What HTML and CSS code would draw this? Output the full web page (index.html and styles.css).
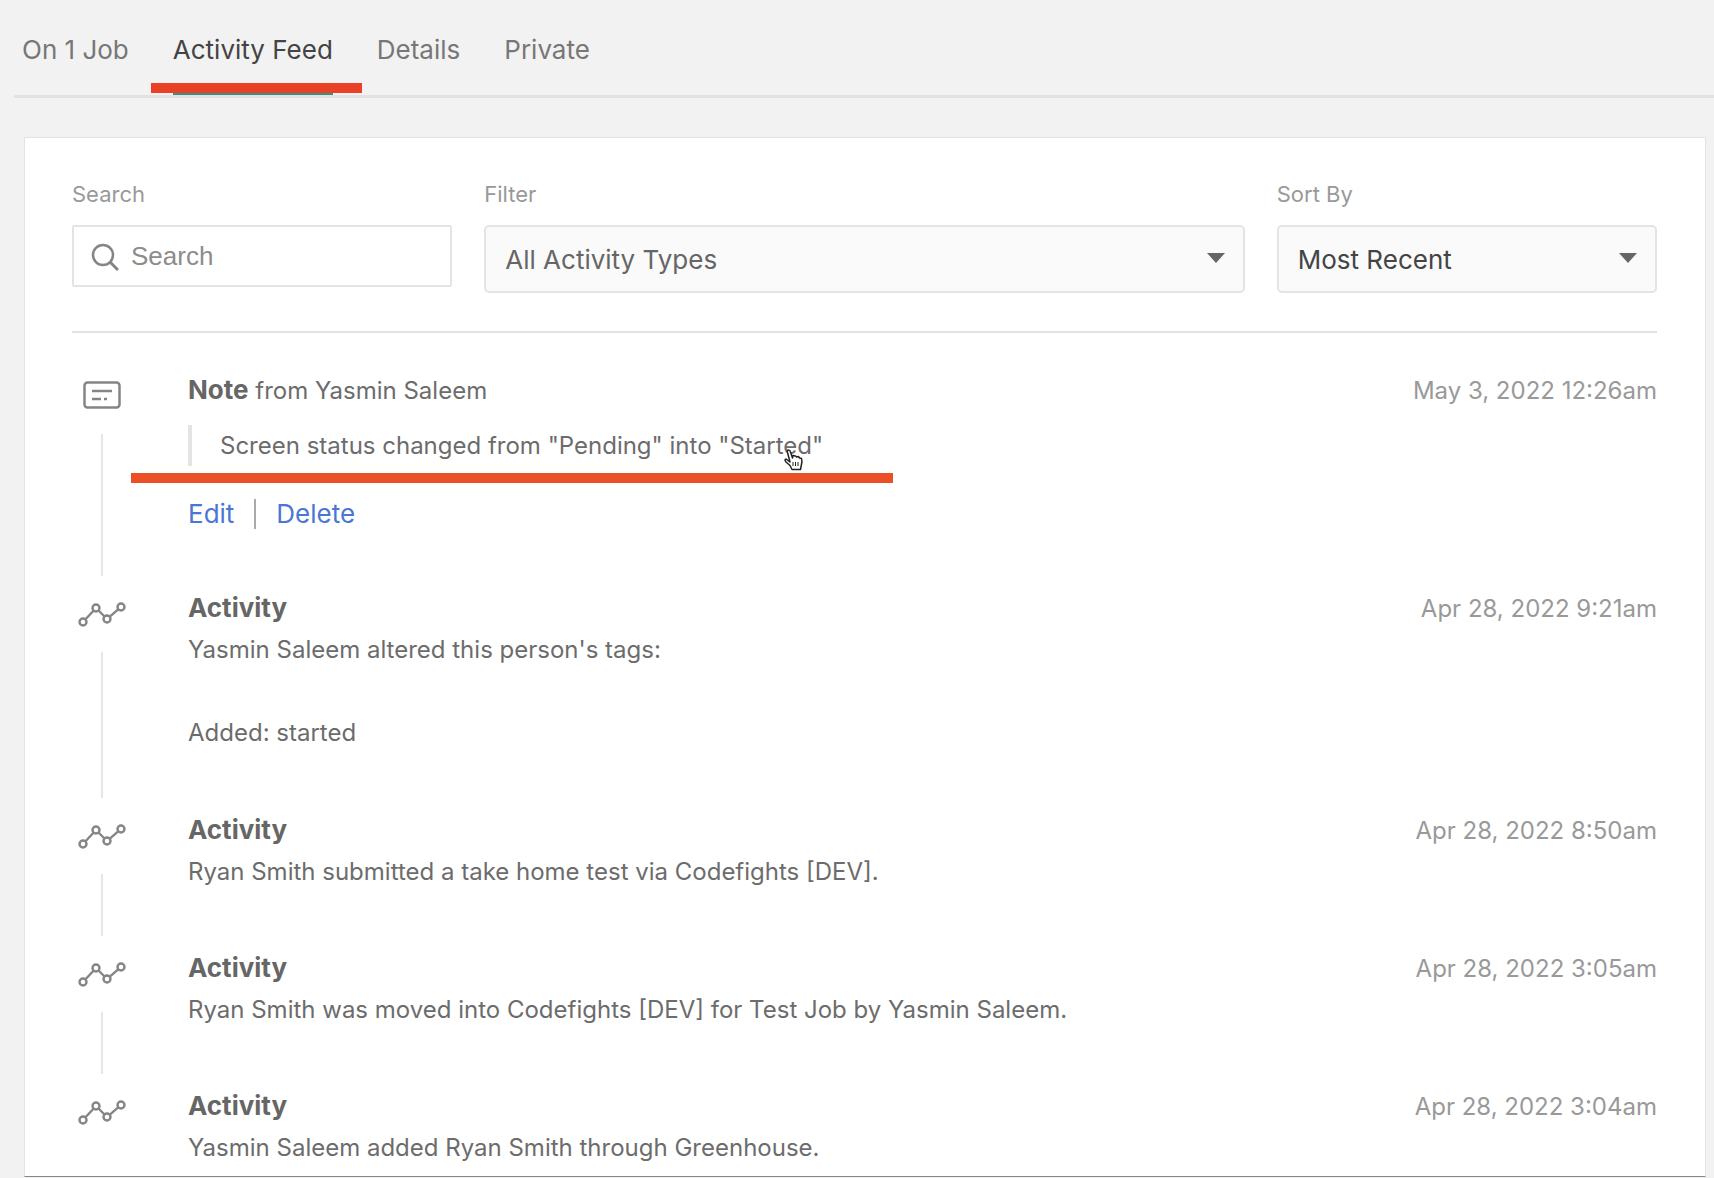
FILE: index.html
```html
<!DOCTYPE html>
<html lang="en">
<head>
  <meta charset="UTF-8">
  <meta name="viewport" content="width=device-width, initial-scale=1.0">
  <title>Activity Feed</title>
  <link rel="stylesheet" href="styles.css">
</head>
<body>

<svg class="sprite" aria-hidden="true">
  <symbol id="icon-activity" viewBox="0 -2 48 26" overflow="visible">
    <g fill="none" stroke="#858585" stroke-width="2.400">
      <circle cx="5" cy="20" r="3.500"/>
      <circle cx="18" cy="6" r="3.500"/>
      <circle cx="29" cy="17" r="3.500"/>
      <circle cx="43" cy="5" r="3.500"/>
      <path d="M7.500 17.300 15.500 8.700M20.500 8.500l6 6M31.800 14.600l8.400-7.200"/>
    </g>
  </symbol>
  <symbol id="icon-caret" viewBox="0 0 18 10">
    <path d="M0 0h18L9 10z" fill="#666"/>
  </symbol>
</svg>

<nav class="tabs">
  <a class="tab" href="#">On 1 Job</a>
  <a class="tab active" href="#">Activity Feed<span class="marker tab-marker"></span></a>
  <a class="tab" href="#">Details</a>
  <a class="tab" href="#">Private</a>
</nav>

<main class="card">
  <form class="filters">
    <div class="field">
      <label for="search">Search</label>
      <div class="search-box">
        <svg class="search-icon" viewBox="0 0 28 28" aria-hidden="true">
          <circle cx="12" cy="12" r="10" fill="none" stroke="#858585" stroke-width="2.500"/>
          <path d="M19 19l8 8" stroke="#858585" stroke-width="3"/>
        </svg>
        <input type="text" id="search" placeholder="Search">
      </div>
    </div>
    <div class="field">
      <label for="filter">Filter</label>
      <div class="select-box">
        <select id="filter"><option>All Activity Types</option></select>
        <svg class="caret" aria-hidden="true"><use href="#icon-caret"/></svg>
      </div>
    </div>
    <div class="field">
      <label for="sort">Sort By</label>
      <div class="select-box">
        <select id="sort" class="dark"><option>Most Recent</option></select>
        <svg class="caret" aria-hidden="true"><use href="#icon-caret"/></svg>
      </div>
    </div>
  </form>

  <ul class="feed">
    <li class="entry">
      <div class="rail">
        <svg class="icon" viewBox="0 0 48 26" aria-hidden="true">
          <rect x="6.500" y="0.500" width="35" height="25" rx="3" fill="none" stroke="#858585" stroke-width="2.500"/>
          <path d="M14 9h20M14 17h9M26 17h3" stroke="#858585" stroke-width="2.500"/>
        </svg>
      </div>
      <div class="content">
        <p><strong>Note</strong> from Yasmin Saleem</p>
        <blockquote class="note">
          Screen status changed from "Pending" into "Started"
          <span class="marker note-marker"></span>
          <svg class="pointer" viewBox="0 0 20 22" aria-hidden="true">
            <path d="M7 13 4.500 3.500Q4 1 5.500 1T7.500 3l2 6 .5-2.500 2.500.5 1 1 2-.5 1 1.500 2 .5.5 3-1.500 8h-8.500l-2-4-4-3.500q-2-2.500 0-3z" fill="#fff" stroke="#222" stroke-width="1.500" stroke-linejoin="round"/>
            <path d="M10 13v4M12.500 13v4M15 13v4" stroke="#222"/>
          </svg>
        </blockquote>
        <div class="actions">
          <a href="#">Edit</a>
          <a href="#">Delete</a>
        </div>
      </div>
      <time>May 3, 2022 12:26am</time>
    </li>
    <li class="entry">
      <div class="rail"><svg class="icon" aria-hidden="true"><use href="#icon-activity"/></svg></div>
      <div class="content">
        <p><strong>Activity</strong></p>
        <p>Yasmin Saleem altered this person's tags:</p>
        <p class="tags">Added: started</p>
      </div>
      <time>Apr 28, 2022 9:21am</time>
    </li>
    <li class="entry">
      <div class="rail"><svg class="icon" aria-hidden="true"><use href="#icon-activity"/></svg></div>
      <div class="content">
        <p><strong>Activity</strong></p>
        <p>Ryan Smith submitted a take home test via Codefights [DEV].</p>
      </div>
      <time>Apr 28, 2022 8:50am</time>
    </li>
    <li class="entry">
      <div class="rail"><svg class="icon" aria-hidden="true"><use href="#icon-activity"/></svg></div>
      <div class="content">
        <p><strong>Activity</strong></p>
        <p>Ryan Smith was moved into Codefights [DEV] for Test Job by Yasmin Saleem.</p>
      </div>
      <time>Apr 28, 2022 3:05am</time>
    </li>
    <li class="entry">
      <div class="rail"><svg class="icon" aria-hidden="true"><use href="#icon-activity"/></svg></div>
      <div class="content">
        <p><strong>Activity</strong></p>
        <p>Yasmin Saleem added Ryan Smith through Greenhouse.</p>
      </div>
      <time>Apr 28, 2022 3:04am</time>
    </li>
  </ul>
</main>

</body>
</html>
```
FILE: styles.css
```css
* {
    box-sizing: border-box;
}

body {
    margin: 0;
    min-height: 100vh;
    display: flex;
    flex-direction: column;
    background-color: #f2f2f3;
    color: #6c6c6c;
    font-family: Inter, "Liberation Sans", sans-serif;
    font-size: 24px;
    line-height: 41px;
}

p {
    margin: 0;
}

strong {
    color: #666;
    font-size: 26px;
    font-weight: 700;
    line-height: 1;
}

.sprite {
    display: none;
}

.tabs {
    display: flex;
    gap: 44px;
    margin-left: 14px;
    padding: 29px 8px 0;
    border-bottom: 3px solid #e1e2e4;
    font-size: 26px;
}

.tab {
    position: relative;
    padding-bottom: 25px;
    color: #777;
    text-decoration: none;
}

.tab.active {
    color: #444;
    box-shadow: inset 0 -2px 0 #3f8f80;
}

.marker {
    position: absolute;
    height: 10px;
    background-color: #ea4025;
}

.tab-marker {
    bottom: 2px;
    left: -22px;
    right: -29px;
}

.card {
    flex: 1;
    margin: 39px 8px 1px 24px;
    padding: 36px 48px 0 47px;
    background-color: #fff;
    border: 1px solid #e3e3e6;
    border-bottom-color: #888;
}

.filters {
    display: grid;
    grid-template-columns: 1fr 2fr 1fr;
    gap: 32px;
    padding-bottom: 38px;
    border-bottom: 2px solid #e1e2e4;
}

label {
    display: block;
    margin-bottom: 10px;
    color: #999;
    font-size: 22px;
}

.search-box,
.select-box {
    position: relative;
}

.search-icon {
    position: absolute;
    top: 18px;
    left: 19px;
    width: 28px;
    height: 28px;
}

input,
select {
    display: block;
    width: 100%;
    border: 2px solid #e4e4e7;
    font-size: 26px;
}

input {
    height: 62px;
    padding: 0 16px 0 57px;
    border-radius: 2px;
    background-color: #fff;
    font-family: "Liberation Sans", Arial, sans-serif;
}

input::placeholder {
    color: #8c8c8c;
    opacity: 1;
}

select {
    height: 68px;
    padding: 0 60px 0 19px;
    appearance: none;
    border-radius: 5px;
    background-color: #fafafa;
    color: #666;
    font-family: inherit;
}

select.dark {
    color: #444;
}

.caret {
    position: absolute;
    top: 28px;
    right: 20px;
    width: 18px;
    height: 10px;
    pointer-events: none;
}

.feed {
    margin: 0;
    padding: 37px 0 0;
    list-style: none;
}

.entry {
    display: grid;
    grid-template-columns: 60px 1fr auto;
    column-gap: 56px;
    min-height: 138px;
}

.rail {
    display: flex;
    flex-direction: column;
    align-items: center;
    padding-top: 12px;
}

.icon {
    width: 48px;
    height: 26px;
    overflow: visible;
}

.entry:not(:last-child) .rail::after {
    content: "";
    flex: 1;
    width: 2px;
    margin: 26px 0 12px;
    background-color: #e6e6e6;
}

.entry:last-child {
    min-height: 0;
}

.tags {
    margin-top: 42px;
    padding-bottom: 57px;
}

.note {
    position: relative;
    width: fit-content;
    margin: 14px 0 33px;
    padding-left: 28px;
    border-left: 4px solid #e4e4e4;
}

.note-marker {
    bottom: -17px;
    left: -61px;
    right: -70px;
    background-color: #ea4f25;
}

.pointer {
    position: absolute;
    top: 24px;
    right: 20px;
    width: 20px;
    height: 22px;
}

.actions {
    display: flex;
    padding-bottom: 59px;
    font-size: 26px;
}

.actions a {
    color: #4a76d4;
    line-height: 30px;
    text-decoration: none;
}

.actions a + a {
    margin-left: 20px;
    padding-left: 20px;
    border-left: 2px solid #aaa;
}

time {
    color: #999;
}
```
